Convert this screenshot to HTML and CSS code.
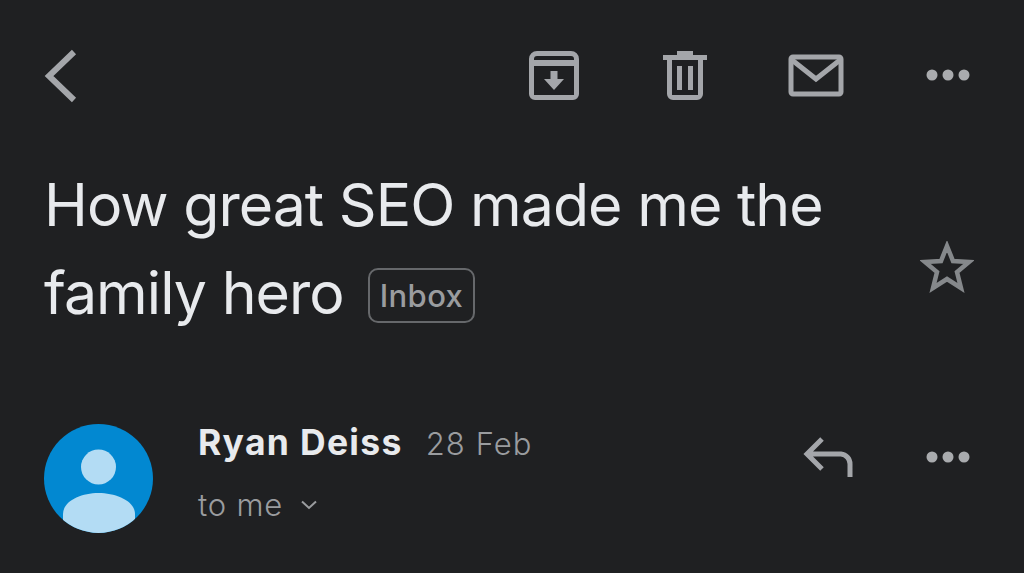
FILE: index.html
```html
<!DOCTYPE html>
<html lang="en">
<head>
<meta charset="utf-8">
<title>How great SEO made me the family hero</title>
<link rel="stylesheet" href="styles.css">
</head>
<body>
<main class="screen">
  <header class="toolbar">
    <svg class="icon-back" width="34" height="54" viewBox="0 0 34 54"><path d="M30 3 L5 27 L30 51" fill="none" stroke="#a4a6aa" stroke-width="6"/></svg>
    <div class="actions">
      <svg class="icon-archive" width="52" height="50" viewBox="0 0 52 50"><path fill-rule="evenodd" fill="#a4a6aa" d="M9 0H43A8 8 0 0 1 51 8V43A6 6 0 0 1 45 49H7A6 6 0 0 1 1 43V8A8 8 0 0 1 9 0ZM9 5H43A3 3 0 0 1 46 8V9H6V8A3 3 0 0 1 9 5ZM6 15H46V44H6Z"/><path fill="#a4a6aa" d="M22.500 20H29.500V28H36L26 39L16 28H22.500Z"/></svg>
      <svg class="icon-trash" width="44" height="50" viewBox="0 0 44 50"><path fill-rule="evenodd" fill="#a4a6aa" d="M14 0H30V4H44V9H40V43A6 6 0 0 1 34 49H10A6 6 0 0 1 4 43V9H0V4H14ZM9 9H35V44H9Z"/><rect x="14" y="15" width="5" height="24" fill="#a4a6aa"/><rect x="25" y="15" width="5" height="24" fill="#a4a6aa"/></svg>
      <svg class="icon-mail" width="56" height="44" viewBox="0 0 56 44"><rect x="3" y="3" width="50" height="37" rx="2" fill="none" stroke="#a4a6aa" stroke-width="5"/><path d="M4 6 L28 25 L52 6" fill="none" stroke="#a4a6aa" stroke-width="5"/></svg>
      <svg class="icon-dots" width="44" height="12" viewBox="0 0 44 12"><circle cx="6" cy="6" r="5.500" fill="#a9abae"/><circle cx="22" cy="6" r="5.500" fill="#a9abae"/><circle cx="38" cy="6" r="5.500" fill="#a9abae"/></svg>
    </div>
  </header>

  <section class="subject">
    <h1 class="title">How great SEO made me the<br>family hero<span class="label">Inbox</span></h1>
    <svg class="icon-star" width="54" height="52" viewBox="0 0 54 52"><path d="M27 5 L33 20 L49 21 L37 31 L41 47 L27 38 L13 47 L17 31 L5 21 L21 20 Z" fill="none" stroke="#85888b" stroke-width="4.500"/></svg>
  </section>

  <section class="sender">
    <svg class="avatar" width="109" height="109" viewBox="0 0 109 109"><defs><clipPath id="avatar-clip"><circle cx="54.500" cy="54.500" r="54.500"/></clipPath></defs><circle cx="54.500" cy="54.500" r="54.500" fill="#0288d1"/><circle cx="54.500" cy="43" r="17.500" fill="#b3dcf4"/><path clip-path="url(#avatar-clip)" d="M19 109V90C19 77 37 69 54.500 69S91 77 91 90V109Z" fill="#b3dcf4"/></svg>
    <div class="meta">
      <div class="from"><span class="name">Ryan Deiss</span><span class="date">28 Feb</span></div>
      <div class="to"><span>to me</span><svg width="18" height="12" viewBox="0 0 18 12"><path d="M2 2.500 L9 9 L16 2.500" fill="none" stroke="#9a9c9f" stroke-width="2"/></svg></div>
    </div>
    <div class="sender-actions">
      <svg class="icon-reply" width="50" height="42" viewBox="0 0 50 42"><path d="M19 3 L4 18 L19 33 M4 18 H38 A10 10 0 0 1 47 28 V41" fill="none" stroke="#a4a6aa" stroke-width="5"/></svg>
      <svg class="icon-dots" width="44" height="12" viewBox="0 0 44 12"><circle cx="6" cy="6" r="5.500" fill="#a9abae"/><circle cx="22" cy="6" r="5.500" fill="#a9abae"/><circle cx="38" cy="6" r="5.500" fill="#a9abae"/></svg>
    </div>
  </section>
</main>
</body>
</html>
```

FILE: styles.css
```css
* { box-sizing: border-box; }
html, body { margin: 0; padding: 0; }
body { background: #1f2022; font-family: "Inter", "Liberation Sans", sans-serif; overflow: hidden; }
.screen { width: 1024px; height: 573px; padding: 0 54px 0 44px; display: flex; flex-direction: column; }
svg { display: block; flex: none; }

.toolbar { display: flex; align-items: center; justify-content: space-between; height: 102px; padding-top: 50px; }
.actions { display: flex; align-items: center; }
.icon-trash { margin-left: 83px; }
.icon-mail { margin-left: 81px; }
.actions .icon-dots { margin-left: 82px; margin-top: -2px; }

.subject { display: flex; justify-content: space-between; align-items: flex-start; margin-top: 59px; }
.title { margin: 0; font-size: 59px; font-weight: 370; line-height: 88px; letter-spacing: -0.96px; color: #e8eaed; }
.label { display: inline-block; vertical-align: 7px; margin-left: 24px; height: 55px; padding: 0 10px 0 10px; border: 2px solid #66686b; border-radius: 10px; font-size: 31px; font-weight: 450; line-height: 52px; letter-spacing: 0.4px; color: #9a9c9f; }
.icon-star { margin-right: -4px; margin-top: 80px; }

.sender { display: flex; align-items: flex-start; margin-top: 87px; }
.meta { margin-left: 45px; display: flex; flex-direction: column; }
.from { display: flex; align-items: baseline; gap: 23px; }
.name { font-size: 35.500px; font-weight: 700; line-height: 38px; letter-spacing: 1.3px; color: #e8eaed; }
.date { font-size: 31px; font-weight: 300; line-height: 38px; letter-spacing: 1.1px; color: #9a9c9f; }
.to { display: flex; align-items: center; gap: 17px; margin-top: 23px; font-size: 31px; font-weight: 300; line-height: 38px; letter-spacing: 0.8px; color: #9a9c9f; }
.sender-actions { margin-left: auto; display: flex; align-items: center; gap: 73px; margin-top: 12px; }
```
